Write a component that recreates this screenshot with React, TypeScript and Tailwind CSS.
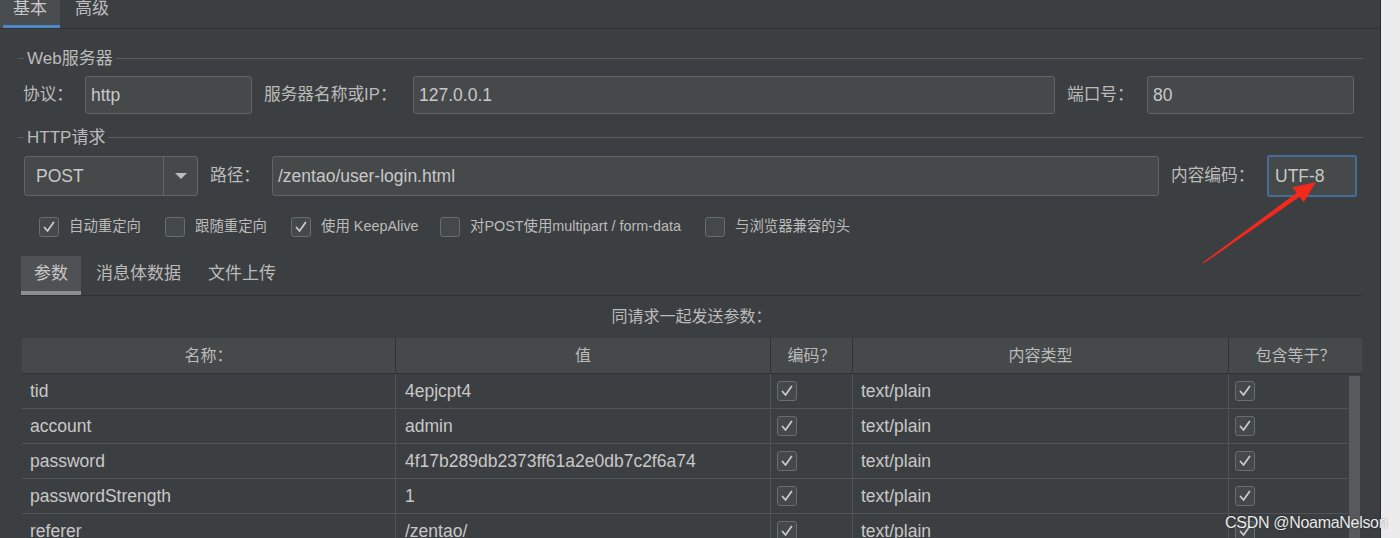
import React from 'react';

const rows = [
  { name: 'tid', value: '4epjcpt4' },
  { name: 'account', value: 'admin' },
  { name: 'password', value: '4f17b289db2373ff61a2e0db7c2f6a74' },
  { name: 'passwordStrength', value: '1' },
  { name: 'referer', value: '/zentao/' },
];

const Check = () => (
  <svg width="14" height="14" viewBox="0 0 14 14" fill="none">
    <path d="M2.5 7.5 L5.5 11 L11.5 2.5" stroke="#c8c8c8" strokeWidth="1.8" strokeLinecap="round" strokeLinejoin="round" />
  </svg>
);

const Box = ({ checked }: { checked?: boolean }) => (
  <div className="w-[20px] h-[20px] shrink-0 rounded-[3px] border border-[#6a6d6f] bg-[#43494a] flex items-center justify-center">
    {checked && <Check />}
  </div>
);

const Field = ({ value, className = '' }: { value: string; className?: string }) => (
  <div className={`rounded-[3px] border border-[#646464] bg-[#45494a] flex items-center px-[5px] text-[17.5px] text-[#c8c8c8] ${className}`}>
    {value}
  </div>
);

const TitledLine = ({ title }: { title: string }) => (
  <div className="h-[20px] flex items-center ml-[18px] mr-[17px]">
    <div className="w-[6px] h-px bg-[#5a5d5f]" />
    <span className="px-[3px] text-[17px] text-[#bbbbbb] leading-none">{title}</span>
    <div className="flex-1 h-px bg-[#5a5d5f]" />
  </div>
);

const CheckItem = ({ label, checked, className = '' }: { label: string; checked?: boolean; className?: string }) => (
  <div className={`flex items-center gap-[10px] ${className}`}>
    <Box checked={checked} />
    <span className="text-[14.4px] text-[#bbbbbb]">{label}</span>
  </div>
);

export default function App() {
  return (
    <div className="relative w-[1400px] h-[538px] overflow-hidden flex font-['Liberation_Sans','Noto_Sans_CJK_SC',sans-serif]">
      <div className="w-[1381px] shrink-0 bg-[#3c3f41] border-r border-[#2b2b2b]">
        {/* top tabs */}
        <div className="h-[29px] flex border-b border-[#323232]">
          <div className="w-[60px] bg-[#4a4d50] flex flex-col">
            <div className="flex-1 flex items-start justify-center text-[17px] text-[#c8c8c8] leading-none">基本</div>
            <div className="h-[3px] ml-[3px] bg-[#4a88c7]" />
          </div>
          <div className="px-[15px] text-[17px] text-[#bbbbbb] leading-none">高级</div>
        </div>

        <div className="mt-[19px]">
          <TitledLine title="Web服务器" />
        </div>

        {/* web server row */}
        <div className="mt-[8px] h-[38px] flex items-center pl-[23px] pr-[26px] text-[16.7px] text-[#bbbbbb]">
          <span className="w-[62px] shrink-0">协议：</span>
          <Field value="http" className="w-[167px] h-[38px]" />
          <span className="w-[161px] shrink-0 pl-[12px]">服务器名称或IP：</span>
          <Field value="127.0.0.1" className="flex-1 h-[38px]" />
          <span className="w-[92px] shrink-0 pl-[12px]">端口号：</span>
          <Field value="80" className="w-[207px] h-[38px]" />
        </div>

        <div className="mt-[13px]">
          <TitledLine title="HTTP请求" />
        </div>

        {/* http request row */}
        <div className="mt-[9px] h-[40px] flex items-center pl-[24px] pr-[23px] text-[16.7px] text-[#bbbbbb]">
          <div className="w-[174px] h-[40px] rounded-[3px] border border-[#646464] bg-[#45494a] flex">
            <div className="flex-1 flex items-center pl-[11px] text-[17.5px] text-[#c8c8c8]">POST</div>
            <div className="w-[34px] border-l border-[#646464] flex items-center justify-center">
              <div className="w-0 h-0 border-l-[6px] border-r-[6px] border-t-[6px] border-l-transparent border-r-transparent border-t-[#bbbbbb]" />
            </div>
          </div>
          <span className="w-[74px] shrink-0 pl-[12px]">路径：</span>
          <Field value="/zentao/user-login.html" className="flex-1 h-[40px]" />
          <span className="w-[108px] shrink-0 pl-[12px]">内容编码：</span>
          <div className="w-[90px] h-[42px] rounded-[3px] border-2 border-[#466d94] bg-[#45494a] flex items-center px-[6px] text-[17.5px] text-[#c8c8c8]">UTF-8</div>
        </div>

        {/* checkboxes */}
        <div className="mt-[21px] h-[20px] flex items-center pl-[39px]">
          <CheckItem label="自动重定向" checked className="w-[126px]" />
          <CheckItem label="跟随重定向" className="w-[126px]" />
          <CheckItem label="使用 KeepAlive" checked className="w-[149px]" />
          <CheckItem label="对POST使用multipart / form-data" className="w-[265px]" />
          <CheckItem label="与浏览器兼容的头" />
        </div>

        {/* sub tabs */}
        <div className="mt-[19px] ml-[21px] mr-[19px] h-[40px] flex border-b border-[#323232]">
          <div className="w-[60px] bg-[#4e5254] flex flex-col">
            <div className="flex-1 flex items-center justify-center text-[17px] text-[#c8c8c8]">参数</div>
            <div className="h-[4px] bg-[#8c8e90]" />
          </div>
          <div className="flex items-center pl-[15px] text-[17px] text-[#bbbbbb] pb-[4px]">消息体数据</div>
          <div className="flex items-center pl-[27px] text-[17px] text-[#bbbbbb] pb-[4px]">文件上传</div>
        </div>

        <div className="mt-[11px] h-[20px] flex items-center justify-center text-[16px] text-[#bbbbbb] ml-[22px] mr-[19px]">
          同请求一起发送参数：
        </div>

        {/* table */}
        <div className="mt-[11px] ml-[22px] w-[1340px]">
          <div className="h-[36px] grid grid-cols-[374px_375px_82px_376px_133px] bg-[#45494a] border-b border-[#2f3133] text-[16px] text-[#bbbbbb]">
            <div className="flex items-center justify-center border-r border-[#2f3133]">名称：</div>
            <div className="flex items-center justify-center border-r border-[#2f3133]">值</div>
            <div className="flex items-center justify-center border-r border-[#2f3133]">编码？</div>
            <div className="flex items-center justify-center border-r border-[#2f3133]">内容类型</div>
            <div className="flex items-center justify-center">包含等于？</div>
          </div>
          <div className="flex">
            <div className="w-[1326px]">
              {rows.map((r) => (
                <div key={r.name} className="h-[35px] grid grid-cols-[374px_375px_82px_376px_119px] border-b border-[#515456] text-[17.5px] text-[#c8c8c8]">
                  <div className="flex items-center pl-[8px] border-r border-[#515456]">{r.name}</div>
                  <div className="flex items-center pl-[9px] border-r border-[#515456]">{r.value}</div>
                  <div className="flex items-center pl-[6px] border-r border-[#515456]"><Box checked /></div>
                  <div className="flex items-center pl-[8px] border-r border-[#515456]">text/plain</div>
                  <div className="flex items-center pl-[6px]"><Box checked /></div>
                </div>
              ))}
            </div>
            <div className="w-[14px] pl-[1px] pt-[2px]">
              <div className="w-[11px] h-[200px] bg-[#565a5c]" />
            </div>
          </div>
        </div>
      </div>
      <div className="flex-1 bg-[#ececec]" />

      <svg className="absolute left-0 top-0 pointer-events-none" width="1400" height="538" viewBox="0 0 1400 538">
        <polygon
          points="1202.7,262.6 1296.6,192.8 1292.4,187.3 1316,182 1303.8,202.3 1299.6,196.8 1203.5,263.6"
          fill="#f2291c"
        />
      </svg>
      <div className="absolute left-[1225px] top-[511px] text-[16px] text-white/90 tracking-[-0.3px] [text-shadow:0_0_2px_rgba(0,0,0,0.5)]">
        CSDN @NoamaNelson
      </div>
    </div>
  );
}
